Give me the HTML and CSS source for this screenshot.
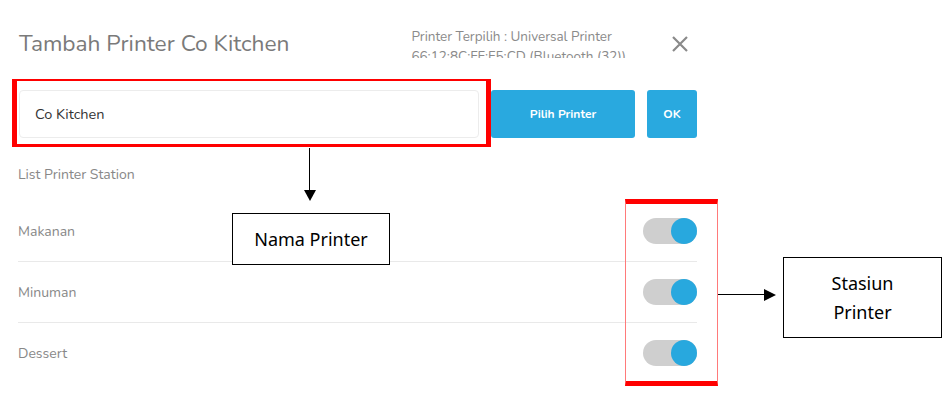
FILE: index.html
```html
<!DOCTYPE html>
<html>
<head>
<meta charset="utf-8">
<link rel="stylesheet" href="styles.css">
</head>
<body>
<div class="page">
  <div class="dialog">
    <div class="header">
      <div class="title">Tambah Printer Co Kitchen</div>
      <div class="info">
        <div>Printer Terpilih : Universal Printer</div>
        <div>66:12:8C:FF:F5:CD (Bluetooth (32))</div>
      </div>
      <svg class="close" width="18" height="18" viewBox="0 0 18 18"><path d="M2 2 L16 16 M16 2 L2 16" stroke="#8a8a8a" stroke-width="2.2" fill="none"/></svg>
    </div>
    <div class="form-row">
      <div class="input">Co Kitchen</div>
      <button class="btn btn-wide">Pilih Printer</button>
      <button class="btn btn-ok">OK</button>
    </div>
    <div class="list-label">List Printer Station</div>
    <div class="list">
      <div class="row"><span>Makanan</span><span class="toggle"><span class="knob"></span></span></div>
      <div class="row"><span>Minuman</span><span class="toggle"><span class="knob"></span></span></div>
      <div class="row"><span>Dessert</span><span class="toggle"><span class="knob"></span></span></div>
    </div>
  </div>

  <div class="mark mark-input"></div>
  <div class="mark mark-toggles"></div>

  <div class="arrow-down"><span class="shaft-v"></span><span class="head-down"></span></div>
  <div class="callout callout-name">Nama Printer</div>

  <div class="arrow-right"><span class="shaft-h"></span><span class="head-right"></span></div>
  <div class="callout callout-station">Stasiun<br>Printer</div>
</div>
</body>
</html>
```
FILE: styles.css
```css
* { box-sizing: border-box; }
html, body { margin: 0; padding: 0; background: #fff; }
body { width: 952px; height: 415px; overflow: hidden; font-family: "Nunito", "Lato", "Noto Sans", sans-serif; }
.page { position: relative; width: 952px; height: 415px; }

.dialog { width: 697px; padding-left: 18px; }

.header { display: flex; align-items: flex-start; height: 90px; }
.title { margin-top: 29px; margin-left: 1px; font-size: 22.7px; line-height: 30px; color: #7a7a7a; }
.info { margin-left: auto; margin-top: 27px; height: 31px; overflow: hidden; font-size: 13.5px; line-height: 20px; color: #8a8a8a; }
.close { margin-left: 45px; margin-right: 8px; margin-top: 35px; }

.form-row { display: flex; gap: 12px; height: 48px; }
.input { width: 460px; margin-left: 1px; border: 1px solid #ececec; border-radius: 4px; padding-left: 15px; display: flex; align-items: center; font-size: 14.5px; color: #333; }
.btn { border: none; border-radius: 3px; background: #29a9df; color: #fff; font-family: inherit; font-size: 12px; font-weight: 700; height: 48px; padding: 0; }
.btn-wide { width: 144px; }
.btn-ok { width: 50px; }

.list-label { margin-top: 27px; font-size: 14px; line-height: 20px; color: #888; }

.list { margin-top: 16px; }
.row { display: flex; align-items: center; justify-content: space-between; height: 61px; border-bottom: 1px solid #e9e9e9; font-size: 14px; color: #888; }
.row:last-child { border-bottom: none; height: 60px; }
.toggle { position: relative; width: 54px; height: 26px; border-radius: 13px; background: #cfcfcf; }
.knob { position: absolute; right: 0; top: 0; width: 26px; height: 26px; border-radius: 50%; background: #28a8de; }

.mark { position: absolute; }
.mark-input { left: 12px; top: 79px; width: 479px; height: 68px; border-style: solid; border-color: #ff0000; border-width: 2px 5px 3px 5px; }
.mark-toggles { left: 625px; top: 199px; width: 93px; height: 187px; border-style: solid; border-color: #ff0000; border-width: 5px 1px 5px 1px; border-left-color: #ff7a7a; border-right-color: #ff7a7a; }

.arrow-down { position: absolute; left: 303px; top: 148px; width: 13px; display: flex; flex-direction: column; align-items: center; }
.shaft-v { width: 1px; height: 42px; background: #000; }
.head-down { width: 0; height: 0; border-left: 6px solid transparent; border-right: 6px solid transparent; border-top: 11px solid #000; }

.arrow-right { position: absolute; left: 718px; top: 288px; height: 13px; display: flex; align-items: center; }
.shaft-h { width: 46px; height: 1px; background: #000; }
.head-right { width: 0; height: 0; border-top: 6px solid transparent; border-bottom: 6px solid transparent; border-left: 12px solid #000; }

.callout { position: absolute; border: 1px solid #000; background: #fff; color: #000; font-family: "Noto Sans", "Open Sans", sans-serif; font-size: 18px; display: flex; align-items: center; justify-content: center; text-align: center; }
.callout-name { left: 232px; top: 213px; width: 158px; height: 52px; }
.callout-station { left: 783px; top: 257px; width: 159px; height: 81px; line-height: 29px; }
```
